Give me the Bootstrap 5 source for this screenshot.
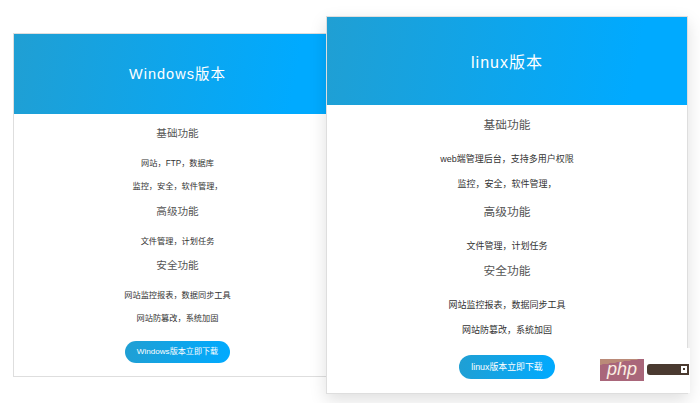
<!DOCTYPE html>
<html lang="zh">
<head>
<meta charset="utf-8">
<title>版本</title>
<link href="https://cdn.jsdelivr.net/npm/bootstrap@5.3.0/dist/css/bootstrap.min.css" rel="stylesheet">
<style>
html,body{height:403px;overflow:hidden;background:#fff}
body{font-family:"Liberation Sans","Noto Sans CJK SC",sans-serif;color:#333}
.stage{position:relative;width:700px;height:403px;padding:33px 0 0 13px}
.plan{border:1px solid #dedede;border-radius:0;text-align:center;background:#fff;flex:none}
.plan-a{width:329px;height:344px}
.plan-b{width:362px;height:378px;margin-top:-17px;margin-left:-16px;z-index:2;box-shadow:0 6px 16px rgba(0,0,0,.13)}
.plan-top{background:linear-gradient(100deg,#209fd3,#00aaff 85%);color:#fff;display:flex;align-items:center;justify-content:center;letter-spacing:1px}
.plan-a .plan-top{height:80px;font-size:14.5px;padding-top:2px}
.plan-b .plan-top{height:88px;font-size:16px;padding-top:3px}
.plan-h{color:#555;margin:0;font-weight:400}
.plan-p{color:#333;margin:0}
.plan-go{background:linear-gradient(100deg,#209fd3,#00aaff);color:#fff;border:0;padding:0;display:block;margin-left:auto;margin-right:auto}
.plan-go:hover{color:#fff}
.plan-body{padding-top:9px}
.plan-a .plan-h{font-size:10.6px;line-height:20px;margin-bottom:14px}
.plan-a .plan-p{font-size:8.2px;line-height:14px;margin-bottom:9px}
.plan-a .plan-h ~ .plan-h{margin-top:-2.5px}
.plan-a .plan-go{width:105px;height:22px;line-height:22px;font-size:8.1px;margin-top:15px}
.plan-b .plan-h{font-size:11.7px;line-height:22px;margin-bottom:16px}
.plan-b .plan-p{font-size:9px;line-height:15px;margin-bottom:10px}
.plan-b .plan-h ~ .plan-h{margin-top:-1px}
.plan-b .plan-h ~ .plan-h ~ .plan-h{margin-top:-4px}
.plan-b .plan-go{width:96px;height:24px;line-height:24px;font-size:8.9px;margin-top:17px}
.mark-box{position:absolute;left:597px;top:348px;width:93px;height:45px;background:#fff;z-index:3}
.mark-php{position:absolute;left:3px;top:11px;width:44px;height:22px;background:linear-gradient(172deg,#ba8a78 0 20%,#a9667a 21%);color:#fbeee2;font:italic 18px/20px "Liberation Sans",sans-serif;text-align:center}
.mark-bar{position:absolute;left:50px;top:16px;width:33px;height:11px;background:#4a3a30;border-radius:3px 0 0 3px}
.mark-end{position:absolute;left:83px;top:16px;width:9px;height:11px;border:2px solid #4a3a30;border-left-width:1px}
.mark-end::after{content:"";position:absolute;left:2px;top:2px;width:2px;height:2px;background:#4a3a30}
</style>
</head>
<body>
<div class="stage d-flex align-items-start">
  <div class="card plan plan-a">
    <div class="plan-top">Windows版本</div>
    <div class="plan-body">
      <h3 class="plan-h">基础功能</h3>
      <p class="plan-p">网站，FTP，数据库</p>
      <p class="plan-p">监控，安全，软件管理，</p>
      <h3 class="plan-h">高级功能</h3>
      <p class="plan-p">文件管理，计划任务</p>
      <h3 class="plan-h">安全功能</h3>
      <p class="plan-p">网站监控报表，数据同步工具</p>
      <p class="plan-p">网站防篡改，系统加固</p>
      <a class="btn rounded-pill plan-go" href="#">Windows版本立即下载</a>
    </div>
  </div>
  <div class="card plan plan-b">
    <div class="plan-top">linux版本</div>
    <div class="plan-body">
      <h3 class="plan-h">基础功能</h3>
      <p class="plan-p">web端管理后台，支持多用户权限</p>
      <p class="plan-p">监控，安全，软件管理，</p>
      <h3 class="plan-h">高级功能</h3>
      <p class="plan-p">文件管理，计划任务</p>
      <h3 class="plan-h">安全功能</h3>
      <p class="plan-p">网站监控报表，数据同步工具</p>
      <p class="plan-p">网站防篡改，系统加固</p>
      <a class="btn rounded-pill plan-go" href="#">linux版本立即下载</a>
    </div>
  </div>
  <div class="mark-box">
    <div class="mark-php">php</div>
    <div class="mark-bar"></div>
    <div class="mark-end"></div>
  </div>
</div>
<script src="https://cdn.jsdelivr.net/npm/bootstrap@5.3.0/dist/js/bootstrap.bundle.min.js"></script>
</body>
</html>
